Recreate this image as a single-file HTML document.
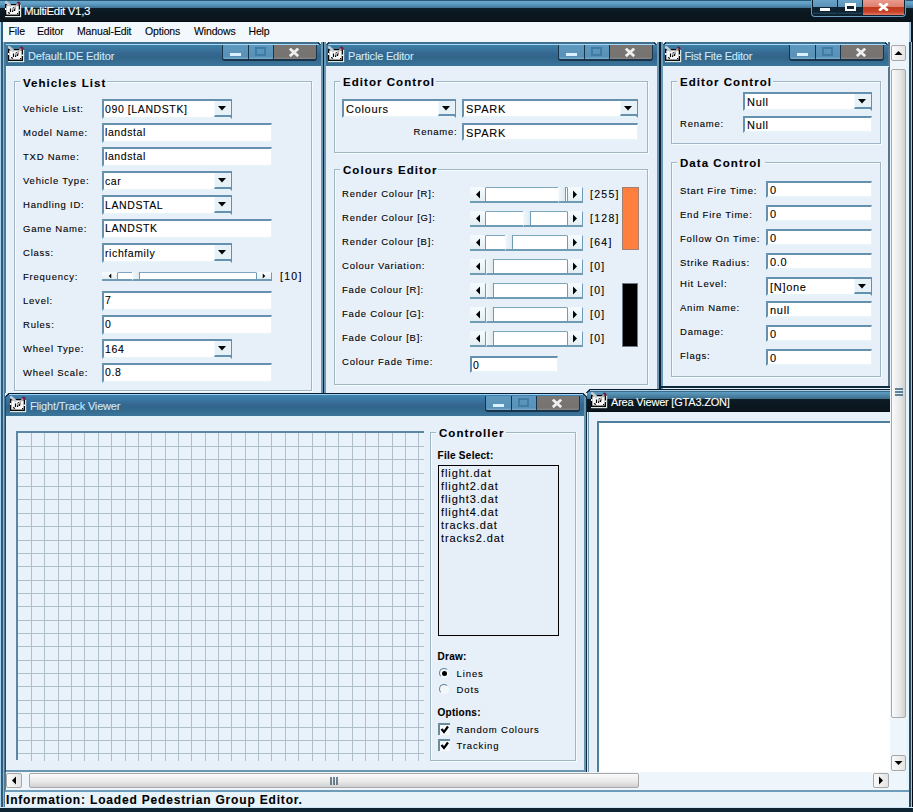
<!DOCTYPE html><html><head><meta charset="utf-8"><style>
html,body{margin:0;padding:0;}
body{width:913px;height:812px;position:relative;overflow:hidden;background:#e7eff9;font-family:"Liberation Sans",sans-serif;}
.t{position:absolute;white-space:pre;line-height:0;height:0;}
.t span{display:inline-block;line-height:normal;transform:translateY(-0.905em);-webkit-text-stroke:0.1px currentColor;}
</style></head><body>
<div style="position:absolute;left:0px;top:0px;width:913px;height:812px;background:#e7eff9"></div>
<div style="position:absolute;left:0px;top:0px;width:1px;height:812px;background:#a8d4f0"></div>
<div style="position:absolute;left:1px;top:0px;width:2px;height:812px;background:#2f5a78"></div>
<div style="position:absolute;left:3px;top:22px;width:3px;height:790px;background:#4d7a98"></div>
<div style="position:absolute;left:3px;top:22px;width:1px;height:790px;background:#8cb4d4"></div>
<div style="position:absolute;left:905px;top:22px;width:4px;height:790px;background:#e6f4fc"></div>
<div style="position:absolute;left:909px;top:42px;width:2px;height:770px;background:#2c4a5c"></div>
<div style="position:absolute;left:911px;top:42px;width:1px;height:770px;background:#9cc8e4"></div>
<div style="position:absolute;left:912px;top:0px;width:1px;height:812px;background:#000818"></div>
<div style="position:absolute;left:0px;top:0px;width:913px;height:22px;background:linear-gradient(#2a5a78 0,#2a5a78 1px,#6aa8cc 1px,#5e9cc4 4px,#3d6d8c 8.5px,#0e1e2a 8.5px,#0b1820 12px,#0a141c 21px,#02080c 22px)"></div>
<svg style="position:absolute;left:3px;top:0px" width="20" height="20" viewBox="0 0 20 20">
<rect x="2" y="16" width="16" height="1.2" fill="#dde8e0"/>
<rect x="17" y="5" width="1.2" height="12" fill="#dde8e0"/>
<rect x="2.65" y="4.65" width="13.7" height="10.6" fill="#fafafa" stroke="#000" stroke-width="1.3"/>
<rect x="2" y="8" width="1.4" height="2" fill="#fafafa"/>
<rect x="15.6" y="9.5" width="1.4" height="1.5" fill="#fafafa"/>
<path d="M7.5 8.5V12M10.5 7L9.5 12M12 7.5L11.5 11M5 12.5L7 13.5" stroke="#000" stroke-width="1.2" fill="none"/>
<rect x="14" y="13" width="1.2" height="1.2" fill="#000"/>
<path d="M3.2 2.2L7.2 5.8" stroke="#c4ccd0" stroke-width="2.6" stroke-linecap="round"/>
<path d="M14.5 4L9.5 10" stroke="#b8b8b8" stroke-width="1.4"/>
<circle cx="15.6" cy="3.4" r="1.9" fill="#6a2242"/>
<circle cx="14.6" cy="4.2" r="0.9" fill="#c08aa0"/>
</svg>
<div class="t" style="left:24px;top:15px;font-size:11.5px;font-weight:normal;color:#fff;letter-spacing:-0.35px;"><span>MultiEdit V1,3</span></div>
<div style="position:absolute;left:811px;top:0px;width:93px;height:16px;border:1px solid #6a9cc0;border-top:none;border-radius:0 0 4px 4px;background:#0f2230;overflow:hidden">
<div style="position:absolute;left:1px;top:0;width:24px;height:14.5px;background:linear-gradient(#6aa2c8 0,#5a92b8 7px,#10222f 7.5px,#0f2230 12px,#2a5670 14.5px,#0f2230 14.5px)"></div>
<div style="position:absolute;left:26px;top:0;width:24px;height:14.5px;background:linear-gradient(#6aa2c8 0,#5a92b8 7px,#10222f 7.5px,#0f2230 12px,#2a5670 14.5px,#0f2230 14.5px)"></div>
<div style="position:absolute;left:51px;top:0;width:41px;height:14.5px;background:linear-gradient(#e99a8c 0,#df8070 6.5px,#c13a1c 7.5px,#c84428 12px,#e07060 14.5px)"></div>
</div>
<div style="position:absolute;left:820px;top:8px;width:10px;height:3px;background:#fff"></div>
<div style="position:absolute;left:845px;top:3px;width:7px;height:3px;border:2px solid #fff;border-top-width:3px;background:#10222f"></div>
<svg style="position:absolute;left:878px;top:3px" width="11" height="8" viewBox="0 0 11 8"><path d="M1.2 0.5L9.8 7.5M9.8 0.5L1.2 7.5" stroke="#fff" stroke-width="2.8"/></svg>
<div style="position:absolute;left:3px;top:22px;width:906px;height:20px;background:#f2f8fc"></div>
<div style="position:absolute;left:909px;top:22px;width:2px;height:20px;background:#a0c8e0"></div>
<div style="position:absolute;left:911px;top:22px;width:2px;height:20px;background:#0a1620"></div>
<div class="t" style="left:8.5px;top:34.5px;font-size:10.5px;font-weight:normal;color:#000;letter-spacing:-0.15px;"><span>File</span></div>
<div class="t" style="left:37px;top:34.5px;font-size:10.5px;font-weight:normal;color:#000;letter-spacing:-0.15px;"><span>Editor</span></div>
<div class="t" style="left:77px;top:34.5px;font-size:10.5px;font-weight:normal;color:#000;letter-spacing:-0.15px;"><span>Manual-Edit</span></div>
<div class="t" style="left:145px;top:34.5px;font-size:10.5px;font-weight:normal;color:#000;letter-spacing:-0.15px;"><span>Options</span></div>
<div class="t" style="left:194px;top:34.5px;font-size:10.5px;font-weight:normal;color:#000;letter-spacing:-0.15px;"><span>Windows</span></div>
<div class="t" style="left:248.5px;top:34.5px;font-size:10.5px;font-weight:normal;color:#000;letter-spacing:-0.15px;"><span>Help</span></div>
<div style="position:absolute;left:6px;top:42px;width:884px;height:730px;background:#e7eff9"></div>
<div style="position:absolute;left:6px;top:42px;width:317px;height:352px;background:#e7eff9"></div>
<div style="position:absolute;left:6px;top:42px;width:315px;height:24px;background:linear-gradient(#3f7090 0,#3f7090 2px,#a8d8f5 2px,#a8d8f5 3px,#3d80a5 3px,#356690 50%,#316689 65%,#3b7399 95%,#3b7399 100%)"></div>
<div style="position:absolute;left:6px;top:66px;width:1px;height:328px;background:#e0f8ff"></div>
<div style="position:absolute;left:6px;top:66px;width:317px;height:1px;background:#e0f6fd"></div>
<svg style="position:absolute;left:6px;top:45px" width="20" height="20" viewBox="0 0 20 20">
<rect x="2" y="16" width="16" height="1.2" fill="#dde8e0"/>
<rect x="17" y="5" width="1.2" height="12" fill="#dde8e0"/>
<rect x="2.65" y="4.65" width="13.7" height="10.6" fill="#fafafa" stroke="#000" stroke-width="1.3"/>
<rect x="2" y="8" width="1.4" height="2" fill="#fafafa"/>
<rect x="15.6" y="9.5" width="1.4" height="1.5" fill="#fafafa"/>
<path d="M7.5 8.5V12M10.5 7L9.5 12M12 7.5L11.5 11M5 12.5L7 13.5" stroke="#000" stroke-width="1.2" fill="none"/>
<rect x="14" y="13" width="1.2" height="1.2" fill="#000"/>
<path d="M3.2 2.2L7.2 5.8" stroke="#c4ccd0" stroke-width="2.6" stroke-linecap="round"/>
<path d="M14.5 4L9.5 10" stroke="#b8b8b8" stroke-width="1.4"/>
<circle cx="15.6" cy="3.4" r="1.9" fill="#6a2242"/>
<circle cx="14.6" cy="4.2" r="0.9" fill="#c08aa0"/>
</svg>
<div class="t" style="left:28px;top:60px;font-size:11px;font-weight:normal;color:#cfeaf8;letter-spacing:-0.1px;"><span>Default.IDE Editor</span></div>
<div style="position:absolute;left:222px;top:45px;width:93px;height:14px;border:1px solid #17344a;border-top:none;border-bottom-width:2px;border-radius:0 0 3px 3px;background:#17344a;overflow:hidden">
<div style="position:absolute;left:0;top:0;width:25px;height:14px;background:linear-gradient(#6099bf,#5890b6 85%,#7fb0d0)"></div>
<div style="position:absolute;left:26px;top:0;width:24px;height:14px;background:linear-gradient(#6099bf,#5890b6 85%,#7fb0d0)"></div>
<div style="position:absolute;left:51px;top:0;width:42px;height:14px;background:linear-gradient(#7a7673,#767270 85%,#8a8a8c)"></div>
</div>
<div style="position:absolute;left:230px;top:53px;width:11px;height:3px;background:#d8f0ff"></div>
<div style="position:absolute;left:255px;top:47px;width:7px;height:5px;border:2px solid #3f7ca6"></div>
<svg style="position:absolute;left:289px;top:48px" width="10" height="9" viewBox="0 0 10 9"><path d="M0.8 0.6L9.2 8.2M9.2 0.6L0.8 8.2" stroke="#eeeeee" stroke-width="2.7"/></svg>
<div style="position:absolute;left:321px;top:42px;width:2px;height:352px;background:#6d98b4"></div>
<div style="position:absolute;left:323px;top:42px;width:1px;height:352px;background:#0a1e34"></div>
<div style="position:absolute;left:324px;top:42px;width:2px;height:352px;background:#6d98b4"></div>
<div style="position:absolute;left:326px;top:66px;width:1px;height:328px;background:#dcf6ff"></div>
<div style="position:absolute;left:14px;top:81px;width:296px;height:308px;border:1px solid #9fb6c4;box-shadow:1px 1px 0 #f4fcff, inset 1px 1px 0 #f4fcff"></div>
<div style="position:absolute;left:20px;top:75px;width:87px;height:12px;background:#e7eff9"></div>
<div class="t" style="left:23px;top:86.5px;font-size:11.5px;font-weight:bold;color:#000;letter-spacing:1.05px;"><span>Vehicles List</span></div>
<div class="t" style="left:23px;top:112px;font-size:9.5px;font-weight:normal;color:#000;letter-spacing:0.77px;"><span>Vehicle List:</span></div>
<div class="t" style="left:23px;top:136px;font-size:9.5px;font-weight:normal;color:#000;letter-spacing:0.77px;"><span>Model Name:</span></div>
<div class="t" style="left:23px;top:160px;font-size:9.5px;font-weight:normal;color:#000;letter-spacing:0.77px;"><span>TXD Name:</span></div>
<div class="t" style="left:23px;top:184px;font-size:9.5px;font-weight:normal;color:#000;letter-spacing:0.77px;"><span>Vehicle Type:</span></div>
<div class="t" style="left:23px;top:208px;font-size:9.5px;font-weight:normal;color:#000;letter-spacing:0.77px;"><span>Handling ID:</span></div>
<div class="t" style="left:23px;top:232px;font-size:9.5px;font-weight:normal;color:#000;letter-spacing:0.77px;"><span>Game Name:</span></div>
<div class="t" style="left:23px;top:256px;font-size:9.5px;font-weight:normal;color:#000;letter-spacing:0.77px;"><span>Class:</span></div>
<div class="t" style="left:23px;top:280px;font-size:9.5px;font-weight:normal;color:#000;letter-spacing:0.77px;"><span>Frequency:</span></div>
<div class="t" style="left:23px;top:304px;font-size:9.5px;font-weight:normal;color:#000;letter-spacing:0.77px;"><span>Level:</span></div>
<div class="t" style="left:23px;top:328px;font-size:9.5px;font-weight:normal;color:#000;letter-spacing:0.77px;"><span>Rules:</span></div>
<div class="t" style="left:23px;top:352px;font-size:9.5px;font-weight:normal;color:#000;letter-spacing:0.77px;"><span>Wheel Type:</span></div>
<div class="t" style="left:23px;top:376px;font-size:9.5px;font-weight:normal;color:#000;letter-spacing:0.77px;"><span>Wheel Scale:</span></div>
<div style="position:absolute;left:102px;top:99px;width:126px;height:16px;background:#fff;border-top:2px solid #6590ae;border-left:2px solid #6590ae;border-right:2px solid #6590ae;border-bottom:2px solid #e6f4fa"></div>
<div style="position:absolute;left:214px;top:101px;width:16px;height:14px;background:#e6f2f8;border-bottom:2px solid #6590ae;border-left:1px solid #f4fbff;box-sizing:content-box"></div>
<svg style="position:absolute;left:218px;top:106px" width="8" height="5"><path d="M0 0H8L4 4.5Z" fill="#000"/></svg>
<div class="t" style="left:105px;top:113px;font-size:10.5px;font-weight:normal;color:#000;letter-spacing:0.6px;"><span>090 [LANDSTK]</span></div>
<div style="position:absolute;left:102px;top:123px;width:167px;height:16px;background:#fff;border-top:2px solid #6590ae;border-left:2px solid #6590ae;border-bottom:2px solid #e6f4fa;border-right:1px solid #e6f4fa"></div>
<div class="t" style="left:105px;top:136px;font-size:10.5px;font-weight:normal;color:#000;letter-spacing:0.6px;"><span>landstal</span></div>
<div style="position:absolute;left:102px;top:147px;width:167px;height:16px;background:#fff;border-top:2px solid #6590ae;border-left:2px solid #6590ae;border-bottom:2px solid #e6f4fa;border-right:1px solid #e6f4fa"></div>
<div class="t" style="left:105px;top:160px;font-size:10.5px;font-weight:normal;color:#000;letter-spacing:0.6px;"><span>landstal</span></div>
<div style="position:absolute;left:102px;top:171px;width:126px;height:16px;background:#fff;border-top:2px solid #6590ae;border-left:2px solid #6590ae;border-right:2px solid #6590ae;border-bottom:2px solid #e6f4fa"></div>
<div style="position:absolute;left:214px;top:173px;width:16px;height:14px;background:#e6f2f8;border-bottom:2px solid #6590ae;border-left:1px solid #f4fbff;box-sizing:content-box"></div>
<svg style="position:absolute;left:218px;top:178px" width="8" height="5"><path d="M0 0H8L4 4.5Z" fill="#000"/></svg>
<div class="t" style="left:105px;top:185px;font-size:10.5px;font-weight:normal;color:#000;letter-spacing:0.6px;"><span>car</span></div>
<div style="position:absolute;left:102px;top:195px;width:126px;height:16px;background:#fff;border-top:2px solid #6590ae;border-left:2px solid #6590ae;border-right:2px solid #6590ae;border-bottom:2px solid #e6f4fa"></div>
<div style="position:absolute;left:214px;top:197px;width:16px;height:14px;background:#e6f2f8;border-bottom:2px solid #6590ae;border-left:1px solid #f4fbff;box-sizing:content-box"></div>
<svg style="position:absolute;left:218px;top:202px" width="8" height="5"><path d="M0 0H8L4 4.5Z" fill="#000"/></svg>
<div class="t" style="left:105px;top:209px;font-size:10.5px;font-weight:normal;color:#000;letter-spacing:0.6px;"><span>LANDSTAL</span></div>
<div style="position:absolute;left:102px;top:219px;width:167px;height:16px;background:#fff;border-top:2px solid #6590ae;border-left:2px solid #6590ae;border-bottom:2px solid #e6f4fa;border-right:1px solid #e6f4fa"></div>
<div class="t" style="left:105px;top:232px;font-size:10.5px;font-weight:normal;color:#000;letter-spacing:0.6px;"><span>LANDSTK</span></div>
<div style="position:absolute;left:102px;top:243px;width:126px;height:16px;background:#fff;border-top:2px solid #6590ae;border-left:2px solid #6590ae;border-right:2px solid #6590ae;border-bottom:2px solid #e6f4fa"></div>
<div style="position:absolute;left:214px;top:245px;width:16px;height:14px;background:#e6f2f8;border-bottom:2px solid #6590ae;border-left:1px solid #f4fbff;box-sizing:content-box"></div>
<svg style="position:absolute;left:218px;top:250px" width="8" height="5"><path d="M0 0H8L4 4.5Z" fill="#000"/></svg>
<div class="t" style="left:105px;top:257px;font-size:10.5px;font-weight:normal;color:#000;letter-spacing:0.6px;"><span>richfamily</span></div>
<div style="position:absolute;left:102px;top:291px;width:167px;height:16px;background:#fff;border-top:2px solid #6590ae;border-left:2px solid #6590ae;border-bottom:2px solid #e6f4fa;border-right:1px solid #e6f4fa"></div>
<div class="t" style="left:105px;top:304px;font-size:10.5px;font-weight:normal;color:#000;letter-spacing:0.6px;"><span>7</span></div>
<div style="position:absolute;left:102px;top:315px;width:167px;height:16px;background:#fff;border-top:2px solid #6590ae;border-left:2px solid #6590ae;border-bottom:2px solid #e6f4fa;border-right:1px solid #e6f4fa"></div>
<div class="t" style="left:105px;top:328px;font-size:10.5px;font-weight:normal;color:#000;letter-spacing:0.6px;"><span>0</span></div>
<div style="position:absolute;left:102px;top:339px;width:126px;height:16px;background:#fff;border-top:2px solid #6590ae;border-left:2px solid #6590ae;border-right:2px solid #6590ae;border-bottom:2px solid #e6f4fa"></div>
<div style="position:absolute;left:214px;top:341px;width:16px;height:14px;background:#e6f2f8;border-bottom:2px solid #6590ae;border-left:1px solid #f4fbff;box-sizing:content-box"></div>
<svg style="position:absolute;left:218px;top:346px" width="8" height="5"><path d="M0 0H8L4 4.5Z" fill="#000"/></svg>
<div class="t" style="left:105px;top:353px;font-size:10.5px;font-weight:normal;color:#000;letter-spacing:0.6px;"><span>164</span></div>
<div style="position:absolute;left:102px;top:363px;width:167px;height:16px;background:#fff;border-top:2px solid #6590ae;border-left:2px solid #6590ae;border-bottom:2px solid #e6f4fa;border-right:1px solid #e6f4fa"></div>
<div class="t" style="left:105px;top:376px;font-size:10.5px;font-weight:normal;color:#000;letter-spacing:0.6px;"><span>0.8</span></div>
<div style="position:absolute;left:102px;top:272px;width:170px;height:9px;background:#fff;box-sizing:border-box;border-top:1px solid #7fa6bd;border-bottom:2px solid #6f9bb5"></div>
<div style="position:absolute;left:102px;top:272px;width:16px;height:9px;box-sizing:border-box;background:linear-gradient(#f6fbfd,#e3eef4);border-right:1px solid #6f9bb5;border-bottom:2px solid #6f9bb5;border-top:1px solid #f4fbff"></div>
<svg style="position:absolute;left:0;top:0;width:913px;height:812px;pointer-events:none"><path d="M111.25 273.5V278.5L108.75 276.0Z" fill="#000"/></svg>
<div style="position:absolute;left:256px;top:272px;width:16px;height:9px;box-sizing:border-box;background:linear-gradient(#f6fbfd,#e3eef4);border-right:1px solid #6f9bb5;border-left:1px solid #6f9bb5;border-bottom:2px solid #6f9bb5;border-top:1px solid #f4fbff"></div>
<svg style="position:absolute;left:0;top:0;width:913px;height:812px;pointer-events:none"><path d="M262.75 273.5V278.5L265.25 276.0Z" fill="#000"/></svg>
<div style="position:absolute;left:132px;top:272px;width:8px;height:9px;box-sizing:border-box;background:linear-gradient(90deg,#eef6fa,#dfeaf1);border-right:1px solid #6f9bb5;border-bottom:2px solid #6f9bb5;border-left:1px solid #f4fbff"></div>
<div class="t" style="left:280px;top:280px;font-size:10.5px;font-weight:normal;color:#000;letter-spacing:1.29px;"><span>[10]</span></div>
<div style="position:absolute;left:326px;top:42px;width:331px;height:352px;background:#e7eff9"></div>
<div style="position:absolute;left:326px;top:42px;width:331px;height:24px;background:linear-gradient(#3f7090 0,#3f7090 2px,#a8d8f5 2px,#a8d8f5 3px,#3d80a5 3px,#356690 50%,#316689 65%,#3b7399 95%,#3b7399 100%)"></div>
<div style="position:absolute;left:326px;top:66px;width:333px;height:1px;background:#e0f6fd"></div>
<svg style="position:absolute;left:326px;top:45px" width="20" height="20" viewBox="0 0 20 20">
<rect x="2" y="16" width="16" height="1.2" fill="#dde8e0"/>
<rect x="17" y="5" width="1.2" height="12" fill="#dde8e0"/>
<rect x="2.65" y="4.65" width="13.7" height="10.6" fill="#fafafa" stroke="#000" stroke-width="1.3"/>
<rect x="2" y="8" width="1.4" height="2" fill="#fafafa"/>
<rect x="15.6" y="9.5" width="1.4" height="1.5" fill="#fafafa"/>
<path d="M7.5 8.5V12M10.5 7L9.5 12M12 7.5L11.5 11M5 12.5L7 13.5" stroke="#000" stroke-width="1.2" fill="none"/>
<rect x="14" y="13" width="1.2" height="1.2" fill="#000"/>
<path d="M3.2 2.2L7.2 5.8" stroke="#c4ccd0" stroke-width="2.6" stroke-linecap="round"/>
<path d="M14.5 4L9.5 10" stroke="#b8b8b8" stroke-width="1.4"/>
<circle cx="15.6" cy="3.4" r="1.9" fill="#6a2242"/>
<circle cx="14.6" cy="4.2" r="0.9" fill="#c08aa0"/>
</svg>
<div class="t" style="left:348px;top:60px;font-size:11px;font-weight:normal;color:#cfeaf8;letter-spacing:-0.2px;"><span>Particle Editor</span></div>
<div style="position:absolute;left:558px;top:45px;width:93px;height:14px;border:1px solid #17344a;border-top:none;border-bottom-width:2px;border-radius:0 0 3px 3px;background:#17344a;overflow:hidden">
<div style="position:absolute;left:0;top:0;width:25px;height:14px;background:linear-gradient(#6099bf,#5890b6 85%,#7fb0d0)"></div>
<div style="position:absolute;left:26px;top:0;width:24px;height:14px;background:linear-gradient(#6099bf,#5890b6 85%,#7fb0d0)"></div>
<div style="position:absolute;left:51px;top:0;width:42px;height:14px;background:linear-gradient(#7a7673,#767270 85%,#8a8a8c)"></div>
</div>
<div style="position:absolute;left:566px;top:53px;width:11px;height:3px;background:#d8f0ff"></div>
<div style="position:absolute;left:591px;top:47px;width:7px;height:5px;border:2px solid #3f7ca6"></div>
<svg style="position:absolute;left:625px;top:48px" width="10" height="9" viewBox="0 0 10 9"><path d="M0.8 0.6L9.2 8.2M9.2 0.6L0.8 8.2" stroke="#eeeeee" stroke-width="2.7"/></svg>
<div style="position:absolute;left:657px;top:42px;width:2px;height:352px;background:#6d98b4"></div>
<div style="position:absolute;left:659px;top:42px;width:2px;height:352px;background:#0a1e34"></div>
<div style="position:absolute;left:661px;top:42px;width:2px;height:352px;background:#6d98b4"></div>
<div style="position:absolute;left:663px;top:66px;width:1px;height:322px;background:#dcf6ff"></div>
<div style="position:absolute;left:334px;top:81px;width:312px;height:70px;border:1px solid #9fb6c4;box-shadow:1px 1px 0 #f4fcff, inset 1px 1px 0 #f4fcff"></div>
<div style="position:absolute;left:340px;top:75px;width:96px;height:12px;background:#e7eff9"></div>
<div class="t" style="left:343px;top:85.5px;font-size:11.5px;font-weight:bold;color:#000;letter-spacing:1.05px;"><span>Editor Control</span></div>
<div style="position:absolute;left:342px;top:99px;width:110px;height:15px;background:#fff;border-top:2px solid #6590ae;border-left:2px solid #6590ae;border-right:2px solid #6590ae;border-bottom:2px solid #e6f4fa"></div>
<div style="position:absolute;left:438px;top:101px;width:16px;height:13px;background:#e6f2f8;border-bottom:2px solid #6590ae;border-left:1px solid #f4fbff;box-sizing:content-box"></div>
<svg style="position:absolute;left:442px;top:106px" width="8" height="5"><path d="M0 0H8L4 4.5Z" fill="#000"/></svg>
<div class="t" style="left:346px;top:113px;font-size:11px;font-weight:normal;color:#000;letter-spacing:0.7px;"><span>Colours</span></div>
<div style="position:absolute;left:462px;top:99px;width:172px;height:15px;background:#fff;border-top:2px solid #6590ae;border-left:2px solid #6590ae;border-right:2px solid #6590ae;border-bottom:2px solid #e6f4fa"></div>
<div style="position:absolute;left:620px;top:101px;width:16px;height:13px;background:#e6f2f8;border-bottom:2px solid #6590ae;border-left:1px solid #f4fbff;box-sizing:content-box"></div>
<svg style="position:absolute;left:624px;top:106px" width="8" height="5"><path d="M0 0H8L4 4.5Z" fill="#000"/></svg>
<div class="t" style="left:466px;top:113px;font-size:11px;font-weight:normal;color:#000;letter-spacing:0.7px;"><span>SPARK</span></div>
<div class="t" style="left:413.5px;top:135px;font-size:9.5px;font-weight:normal;color:#000;letter-spacing:0.77px;"><span>Rename:</span></div>
<div style="position:absolute;left:462px;top:123px;width:173px;height:14px;background:#fff;border-top:2px solid #6590ae;border-left:2px solid #6590ae;border-bottom:2px solid #e6f4fa;border-right:1px solid #e6f4fa"></div>
<div class="t" style="left:466px;top:137px;font-size:11px;font-weight:normal;color:#000;letter-spacing:0.7px;"><span>SPARK</span></div>
<div style="position:absolute;left:334px;top:169px;width:312px;height:214px;border:1px solid #9fb6c4;box-shadow:1px 1px 0 #f4fcff, inset 1px 1px 0 #f4fcff"></div>
<div style="position:absolute;left:340px;top:163px;width:98px;height:12px;background:#e7eff9"></div>
<div class="t" style="left:343px;top:173.5px;font-size:11.5px;font-weight:bold;color:#000;letter-spacing:1.05px;"><span>Colours Editor</span></div>
<div class="t" style="left:342px;top:197px;font-size:9.5px;font-weight:normal;color:#000;letter-spacing:0.77px;"><span>Render Colour [R]:</span></div>
<div class="t" style="left:342px;top:221px;font-size:9.5px;font-weight:normal;color:#000;letter-spacing:0.77px;"><span>Render Colour [G]:</span></div>
<div class="t" style="left:342px;top:245px;font-size:9.5px;font-weight:normal;color:#000;letter-spacing:0.77px;"><span>Render Colour [B]:</span></div>
<div class="t" style="left:342px;top:269px;font-size:9.5px;font-weight:normal;color:#000;letter-spacing:0.77px;"><span>Colour Variation:</span></div>
<div class="t" style="left:342px;top:293px;font-size:9.5px;font-weight:normal;color:#000;letter-spacing:0.77px;"><span>Fade Colour [R]:</span></div>
<div class="t" style="left:342px;top:317px;font-size:9.5px;font-weight:normal;color:#000;letter-spacing:0.77px;"><span>Fade Colour [G]:</span></div>
<div class="t" style="left:342px;top:341px;font-size:9.5px;font-weight:normal;color:#000;letter-spacing:0.77px;"><span>Fade Colour [B]:</span></div>
<div class="t" style="left:342px;top:365px;font-size:9.5px;font-weight:normal;color:#000;letter-spacing:0.77px;"><span>Colour Fade Time:</span></div>
<div style="position:absolute;left:470px;top:187px;width:113px;height:16px;background:#fff;box-sizing:border-box;border-top:1px solid #7fa6bd;border-bottom:2px solid #6f9bb5"></div>
<div style="position:absolute;left:470px;top:187px;width:16px;height:16px;box-sizing:border-box;background:linear-gradient(#f6fbfd,#e3eef4);border-right:1px solid #6f9bb5;border-bottom:2px solid #6f9bb5;border-top:1px solid #f4fbff"></div>
<svg style="position:absolute;left:0;top:0;width:913px;height:812px;pointer-events:none"><path d="M480.0 190.5V198.5L476.0 194.5Z" fill="#000"/></svg>
<div style="position:absolute;left:567px;top:187px;width:16px;height:16px;box-sizing:border-box;background:linear-gradient(#f6fbfd,#e3eef4);border-right:1px solid #6f9bb5;border-left:1px solid #6f9bb5;border-bottom:2px solid #6f9bb5;border-top:1px solid #f4fbff"></div>
<svg style="position:absolute;left:0;top:0;width:913px;height:812px;pointer-events:none"><path d="M573.0 190.5V198.5L577.0 194.5Z" fill="#000"/></svg>
<div style="position:absolute;left:558px;top:187px;width:8px;height:16px;box-sizing:border-box;background:linear-gradient(90deg,#eef6fa,#dfeaf1);border-right:1px solid #6f9bb5;border-bottom:2px solid #6f9bb5;border-left:1px solid #f4fbff"></div>
<div style="position:absolute;left:470px;top:211px;width:113px;height:16px;background:#fff;box-sizing:border-box;border-top:1px solid #7fa6bd;border-bottom:2px solid #6f9bb5"></div>
<div style="position:absolute;left:470px;top:211px;width:16px;height:16px;box-sizing:border-box;background:linear-gradient(#f6fbfd,#e3eef4);border-right:1px solid #6f9bb5;border-bottom:2px solid #6f9bb5;border-top:1px solid #f4fbff"></div>
<svg style="position:absolute;left:0;top:0;width:913px;height:812px;pointer-events:none"><path d="M480.0 214.5V222.5L476.0 218.5Z" fill="#000"/></svg>
<div style="position:absolute;left:567px;top:211px;width:16px;height:16px;box-sizing:border-box;background:linear-gradient(#f6fbfd,#e3eef4);border-right:1px solid #6f9bb5;border-left:1px solid #6f9bb5;border-bottom:2px solid #6f9bb5;border-top:1px solid #f4fbff"></div>
<svg style="position:absolute;left:0;top:0;width:913px;height:812px;pointer-events:none"><path d="M573.0 214.5V222.5L577.0 218.5Z" fill="#000"/></svg>
<div style="position:absolute;left:523px;top:211px;width:8px;height:16px;box-sizing:border-box;background:linear-gradient(90deg,#eef6fa,#dfeaf1);border-right:1px solid #6f9bb5;border-bottom:2px solid #6f9bb5;border-left:1px solid #f4fbff"></div>
<div style="position:absolute;left:470px;top:235px;width:113px;height:16px;background:#fff;box-sizing:border-box;border-top:1px solid #7fa6bd;border-bottom:2px solid #6f9bb5"></div>
<div style="position:absolute;left:470px;top:235px;width:16px;height:16px;box-sizing:border-box;background:linear-gradient(#f6fbfd,#e3eef4);border-right:1px solid #6f9bb5;border-bottom:2px solid #6f9bb5;border-top:1px solid #f4fbff"></div>
<svg style="position:absolute;left:0;top:0;width:913px;height:812px;pointer-events:none"><path d="M480.0 238.5V246.5L476.0 242.5Z" fill="#000"/></svg>
<div style="position:absolute;left:567px;top:235px;width:16px;height:16px;box-sizing:border-box;background:linear-gradient(#f6fbfd,#e3eef4);border-right:1px solid #6f9bb5;border-left:1px solid #6f9bb5;border-bottom:2px solid #6f9bb5;border-top:1px solid #f4fbff"></div>
<svg style="position:absolute;left:0;top:0;width:913px;height:812px;pointer-events:none"><path d="M573.0 238.5V246.5L577.0 242.5Z" fill="#000"/></svg>
<div style="position:absolute;left:505px;top:235px;width:8px;height:16px;box-sizing:border-box;background:linear-gradient(90deg,#eef6fa,#dfeaf1);border-right:1px solid #6f9bb5;border-bottom:2px solid #6f9bb5;border-left:1px solid #f4fbff"></div>
<div style="position:absolute;left:470px;top:259px;width:113px;height:16px;background:#fff;box-sizing:border-box;border-top:1px solid #7fa6bd;border-bottom:2px solid #6f9bb5"></div>
<div style="position:absolute;left:470px;top:259px;width:16px;height:16px;box-sizing:border-box;background:linear-gradient(#f6fbfd,#e3eef4);border-right:1px solid #6f9bb5;border-bottom:2px solid #6f9bb5;border-top:1px solid #f4fbff"></div>
<svg style="position:absolute;left:0;top:0;width:913px;height:812px;pointer-events:none"><path d="M480.0 262.5V270.5L476.0 266.5Z" fill="#000"/></svg>
<div style="position:absolute;left:567px;top:259px;width:16px;height:16px;box-sizing:border-box;background:linear-gradient(#f6fbfd,#e3eef4);border-right:1px solid #6f9bb5;border-left:1px solid #6f9bb5;border-bottom:2px solid #6f9bb5;border-top:1px solid #f4fbff"></div>
<svg style="position:absolute;left:0;top:0;width:913px;height:812px;pointer-events:none"><path d="M573.0 262.5V270.5L577.0 266.5Z" fill="#000"/></svg>
<div style="position:absolute;left:486px;top:259px;width:8px;height:16px;box-sizing:border-box;background:linear-gradient(90deg,#eef6fa,#dfeaf1);border-right:1px solid #6f9bb5;border-bottom:2px solid #6f9bb5;border-left:1px solid #f4fbff"></div>
<div style="position:absolute;left:470px;top:283px;width:113px;height:16px;background:#fff;box-sizing:border-box;border-top:1px solid #7fa6bd;border-bottom:2px solid #6f9bb5"></div>
<div style="position:absolute;left:470px;top:283px;width:16px;height:16px;box-sizing:border-box;background:linear-gradient(#f6fbfd,#e3eef4);border-right:1px solid #6f9bb5;border-bottom:2px solid #6f9bb5;border-top:1px solid #f4fbff"></div>
<svg style="position:absolute;left:0;top:0;width:913px;height:812px;pointer-events:none"><path d="M480.0 286.5V294.5L476.0 290.5Z" fill="#000"/></svg>
<div style="position:absolute;left:567px;top:283px;width:16px;height:16px;box-sizing:border-box;background:linear-gradient(#f6fbfd,#e3eef4);border-right:1px solid #6f9bb5;border-left:1px solid #6f9bb5;border-bottom:2px solid #6f9bb5;border-top:1px solid #f4fbff"></div>
<svg style="position:absolute;left:0;top:0;width:913px;height:812px;pointer-events:none"><path d="M573.0 286.5V294.5L577.0 290.5Z" fill="#000"/></svg>
<div style="position:absolute;left:486px;top:283px;width:8px;height:16px;box-sizing:border-box;background:linear-gradient(90deg,#eef6fa,#dfeaf1);border-right:1px solid #6f9bb5;border-bottom:2px solid #6f9bb5;border-left:1px solid #f4fbff"></div>
<div style="position:absolute;left:470px;top:307px;width:113px;height:16px;background:#fff;box-sizing:border-box;border-top:1px solid #7fa6bd;border-bottom:2px solid #6f9bb5"></div>
<div style="position:absolute;left:470px;top:307px;width:16px;height:16px;box-sizing:border-box;background:linear-gradient(#f6fbfd,#e3eef4);border-right:1px solid #6f9bb5;border-bottom:2px solid #6f9bb5;border-top:1px solid #f4fbff"></div>
<svg style="position:absolute;left:0;top:0;width:913px;height:812px;pointer-events:none"><path d="M480.0 310.5V318.5L476.0 314.5Z" fill="#000"/></svg>
<div style="position:absolute;left:567px;top:307px;width:16px;height:16px;box-sizing:border-box;background:linear-gradient(#f6fbfd,#e3eef4);border-right:1px solid #6f9bb5;border-left:1px solid #6f9bb5;border-bottom:2px solid #6f9bb5;border-top:1px solid #f4fbff"></div>
<svg style="position:absolute;left:0;top:0;width:913px;height:812px;pointer-events:none"><path d="M573.0 310.5V318.5L577.0 314.5Z" fill="#000"/></svg>
<div style="position:absolute;left:486px;top:307px;width:8px;height:16px;box-sizing:border-box;background:linear-gradient(90deg,#eef6fa,#dfeaf1);border-right:1px solid #6f9bb5;border-bottom:2px solid #6f9bb5;border-left:1px solid #f4fbff"></div>
<div style="position:absolute;left:470px;top:331px;width:113px;height:16px;background:#fff;box-sizing:border-box;border-top:1px solid #7fa6bd;border-bottom:2px solid #6f9bb5"></div>
<div style="position:absolute;left:470px;top:331px;width:16px;height:16px;box-sizing:border-box;background:linear-gradient(#f6fbfd,#e3eef4);border-right:1px solid #6f9bb5;border-bottom:2px solid #6f9bb5;border-top:1px solid #f4fbff"></div>
<svg style="position:absolute;left:0;top:0;width:913px;height:812px;pointer-events:none"><path d="M480.0 334.5V342.5L476.0 338.5Z" fill="#000"/></svg>
<div style="position:absolute;left:567px;top:331px;width:16px;height:16px;box-sizing:border-box;background:linear-gradient(#f6fbfd,#e3eef4);border-right:1px solid #6f9bb5;border-left:1px solid #6f9bb5;border-bottom:2px solid #6f9bb5;border-top:1px solid #f4fbff"></div>
<svg style="position:absolute;left:0;top:0;width:913px;height:812px;pointer-events:none"><path d="M573.0 334.5V342.5L577.0 338.5Z" fill="#000"/></svg>
<div style="position:absolute;left:486px;top:331px;width:8px;height:16px;box-sizing:border-box;background:linear-gradient(90deg,#eef6fa,#dfeaf1);border-right:1px solid #6f9bb5;border-bottom:2px solid #6f9bb5;border-left:1px solid #f4fbff"></div>
<div class="t" style="left:590px;top:198px;font-size:10.5px;font-weight:normal;color:#000;letter-spacing:1.29px;"><span>[255]</span></div>
<div class="t" style="left:590px;top:222px;font-size:10.5px;font-weight:normal;color:#000;letter-spacing:1.29px;"><span>[128]</span></div>
<div class="t" style="left:590px;top:246px;font-size:10.5px;font-weight:normal;color:#000;letter-spacing:1.29px;"><span>[64]</span></div>
<div class="t" style="left:590px;top:270px;font-size:10.5px;font-weight:normal;color:#000;letter-spacing:1.29px;"><span>[0]</span></div>
<div class="t" style="left:590px;top:294px;font-size:10.5px;font-weight:normal;color:#000;letter-spacing:1.29px;"><span>[0]</span></div>
<div class="t" style="left:590px;top:318px;font-size:10.5px;font-weight:normal;color:#000;letter-spacing:1.29px;"><span>[0]</span></div>
<div class="t" style="left:590px;top:342px;font-size:10.5px;font-weight:normal;color:#000;letter-spacing:1.29px;"><span>[0]</span></div>
<div style="position:absolute;left:622px;top:187px;width:17px;height:63px;background:#ff7f3f;box-sizing:border-box;border:1px solid #a08070"></div>
<div style="position:absolute;left:622px;top:283px;width:16px;height:64px;background:#000;box-sizing:border-box;border:1px solid #6a7a88"></div>
<div style="position:absolute;left:470px;top:356px;width:85px;height:13px;background:#fff;border-top:2px solid #6590ae;border-left:2px solid #6590ae;border-bottom:2px solid #e6f4fa;border-right:1px solid #e6f4fa"></div>
<div class="t" style="left:473px;top:369px;font-size:10.5px;font-weight:normal;color:#000;letter-spacing:0.6px;"><span>0</span></div>
<div style="position:absolute;left:663px;top:42px;width:225px;height:346px;background:#e7eff9"></div>
<div style="position:absolute;left:663px;top:42px;width:225px;height:24px;background:linear-gradient(#3f7090 0,#3f7090 2px,#a8d8f5 2px,#a8d8f5 3px,#3d80a5 3px,#356690 50%,#316689 65%,#3b7399 95%,#3b7399 100%)"></div>
<div style="position:absolute;left:888px;top:42px;width:2px;height:346px;background:#56778f"></div>
<div style="position:absolute;left:663px;top:66px;width:226px;height:1px;background:#e0f6fd"></div>
<svg style="position:absolute;left:663px;top:45px" width="20" height="20" viewBox="0 0 20 20">
<rect x="2" y="16" width="16" height="1.2" fill="#dde8e0"/>
<rect x="17" y="5" width="1.2" height="12" fill="#dde8e0"/>
<rect x="2.65" y="4.65" width="13.7" height="10.6" fill="#fafafa" stroke="#000" stroke-width="1.3"/>
<rect x="2" y="8" width="1.4" height="2" fill="#fafafa"/>
<rect x="15.6" y="9.5" width="1.4" height="1.5" fill="#fafafa"/>
<path d="M7.5 8.5V12M10.5 7L9.5 12M12 7.5L11.5 11M5 12.5L7 13.5" stroke="#000" stroke-width="1.2" fill="none"/>
<rect x="14" y="13" width="1.2" height="1.2" fill="#000"/>
<path d="M3.2 2.2L7.2 5.8" stroke="#c4ccd0" stroke-width="2.6" stroke-linecap="round"/>
<path d="M14.5 4L9.5 10" stroke="#b8b8b8" stroke-width="1.4"/>
<circle cx="15.6" cy="3.4" r="1.9" fill="#6a2242"/>
<circle cx="14.6" cy="4.2" r="0.9" fill="#c08aa0"/>
</svg>
<div class="t" style="left:684.5px;top:60px;font-size:11px;font-weight:normal;color:#cfeaf8;letter-spacing:-0.2px;"><span>Fist Fite Editor</span></div>
<div style="position:absolute;left:789px;top:45px;width:93px;height:14px;border:1px solid #17344a;border-top:none;border-bottom-width:2px;border-radius:0 0 3px 3px;background:#17344a;overflow:hidden">
<div style="position:absolute;left:0;top:0;width:25px;height:14px;background:linear-gradient(#6099bf,#5890b6 85%,#7fb0d0)"></div>
<div style="position:absolute;left:26px;top:0;width:24px;height:14px;background:linear-gradient(#6099bf,#5890b6 85%,#7fb0d0)"></div>
<div style="position:absolute;left:51px;top:0;width:42px;height:14px;background:linear-gradient(#7a7673,#767270 85%,#8a8a8c)"></div>
</div>
<div style="position:absolute;left:797px;top:53px;width:11px;height:3px;background:#d8f0ff"></div>
<div style="position:absolute;left:822px;top:47px;width:7px;height:5px;border:2px solid #3f7ca6"></div>
<svg style="position:absolute;left:856px;top:48px" width="10" height="9" viewBox="0 0 10 9"><path d="M0.8 0.6L9.2 8.2M9.2 0.6L0.8 8.2" stroke="#eeeeee" stroke-width="2.7"/></svg>
<div style="position:absolute;left:671px;top:81px;width:208px;height:61px;border:1px solid #9fb6c4;box-shadow:1px 1px 0 #f4fcff, inset 1px 1px 0 #f4fcff"></div>
<div style="position:absolute;left:677px;top:75px;width:96px;height:12px;background:#e7eff9"></div>
<div class="t" style="left:680px;top:85.5px;font-size:11.5px;font-weight:bold;color:#000;letter-spacing:1.05px;"><span>Editor Control</span></div>
<div style="position:absolute;left:743px;top:92px;width:125px;height:15px;background:#fff;border-top:2px solid #6590ae;border-left:2px solid #6590ae;border-right:2px solid #6590ae;border-bottom:2px solid #e6f4fa"></div>
<div style="position:absolute;left:854px;top:94px;width:16px;height:13px;background:#e6f2f8;border-bottom:2px solid #6590ae;border-left:1px solid #f4fbff;box-sizing:content-box"></div>
<svg style="position:absolute;left:858px;top:99px" width="8" height="5"><path d="M0 0H8L4 4.5Z" fill="#000"/></svg>
<div class="t" style="left:747px;top:106px;font-size:11px;font-weight:normal;color:#000;letter-spacing:0.7px;"><span>Null</span></div>
<div class="t" style="left:680px;top:127px;font-size:9.5px;font-weight:normal;color:#000;letter-spacing:0.77px;"><span>Rename:</span></div>
<div style="position:absolute;left:743px;top:116px;width:126px;height:13px;background:#fff;border-top:2px solid #6590ae;border-left:2px solid #6590ae;border-bottom:2px solid #e6f4fa;border-right:1px solid #e6f4fa"></div>
<div class="t" style="left:747px;top:129px;font-size:11px;font-weight:normal;color:#000;letter-spacing:0.7px;"><span>Null</span></div>
<div style="position:absolute;left:671px;top:162px;width:208px;height:213px;border:1px solid #9fb6c4;box-shadow:1px 1px 0 #f4fcff, inset 1px 1px 0 #f4fcff"></div>
<div style="position:absolute;left:677px;top:156px;width:88px;height:12px;background:#e7eff9"></div>
<div class="t" style="left:680px;top:166.5px;font-size:11.5px;font-weight:bold;color:#000;letter-spacing:1.05px;"><span>Data Control</span></div>
<div class="t" style="left:680px;top:194px;font-size:9.5px;font-weight:normal;color:#000;letter-spacing:0.77px;"><span>Start Fire Time:</span></div>
<div class="t" style="left:680px;top:218px;font-size:9.5px;font-weight:normal;color:#000;letter-spacing:0.77px;"><span>End Fire Time:</span></div>
<div class="t" style="left:680px;top:242px;font-size:9.5px;font-weight:normal;color:#000;letter-spacing:0.77px;"><span>Follow On Time:</span></div>
<div class="t" style="left:680px;top:266px;font-size:9.5px;font-weight:normal;color:#000;letter-spacing:0.77px;"><span>Strike Radius:</span></div>
<div class="t" style="left:680px;top:287px;font-size:9.5px;font-weight:normal;color:#000;letter-spacing:0.77px;"><span>Hit Level:</span></div>
<div class="t" style="left:680px;top:311px;font-size:9.5px;font-weight:normal;color:#000;letter-spacing:0.77px;"><span>Anim Name:</span></div>
<div class="t" style="left:680px;top:335px;font-size:9.5px;font-weight:normal;color:#000;letter-spacing:0.77px;"><span>Damage:</span></div>
<div class="t" style="left:680px;top:359px;font-size:9.5px;font-weight:normal;color:#000;letter-spacing:0.77px;"><span>Flags:</span></div>
<div style="position:absolute;left:766px;top:181px;width:103px;height:13px;background:#fff;border-top:2px solid #6590ae;border-left:2px solid #6590ae;border-bottom:2px solid #e6f4fa;border-right:1px solid #e6f4fa"></div>
<div class="t" style="left:770px;top:194px;font-size:11px;font-weight:normal;color:#000;letter-spacing:0.7px;"><span>0</span></div>
<div style="position:absolute;left:766px;top:205px;width:103px;height:13px;background:#fff;border-top:2px solid #6590ae;border-left:2px solid #6590ae;border-bottom:2px solid #e6f4fa;border-right:1px solid #e6f4fa"></div>
<div class="t" style="left:770px;top:218px;font-size:11px;font-weight:normal;color:#000;letter-spacing:0.7px;"><span>0</span></div>
<div style="position:absolute;left:766px;top:229px;width:103px;height:13px;background:#fff;border-top:2px solid #6590ae;border-left:2px solid #6590ae;border-bottom:2px solid #e6f4fa;border-right:1px solid #e6f4fa"></div>
<div class="t" style="left:770px;top:242px;font-size:11px;font-weight:normal;color:#000;letter-spacing:0.7px;"><span>0</span></div>
<div style="position:absolute;left:766px;top:253px;width:103px;height:13px;background:#fff;border-top:2px solid #6590ae;border-left:2px solid #6590ae;border-bottom:2px solid #e6f4fa;border-right:1px solid #e6f4fa"></div>
<div class="t" style="left:770px;top:266px;font-size:11px;font-weight:normal;color:#000;letter-spacing:0.7px;"><span>0.0</span></div>
<div style="position:absolute;left:766px;top:277px;width:102px;height:15px;background:#fff;border-top:2px solid #6590ae;border-left:2px solid #6590ae;border-right:2px solid #6590ae;border-bottom:2px solid #e6f4fa"></div>
<div style="position:absolute;left:854px;top:279px;width:16px;height:13px;background:#e6f2f8;border-bottom:2px solid #6590ae;border-left:1px solid #f4fbff;box-sizing:content-box"></div>
<svg style="position:absolute;left:858px;top:284px" width="8" height="5"><path d="M0 0H8L4 4.5Z" fill="#000"/></svg>
<div class="t" style="left:770px;top:291px;font-size:11px;font-weight:normal;color:#000;letter-spacing:0.7px;"><span>[N]one</span></div>
<div style="position:absolute;left:766px;top:301px;width:103px;height:13px;background:#fff;border-top:2px solid #6590ae;border-left:2px solid #6590ae;border-bottom:2px solid #e6f4fa;border-right:1px solid #e6f4fa"></div>
<div class="t" style="left:770px;top:314px;font-size:11px;font-weight:normal;color:#000;letter-spacing:0.7px;"><span>null</span></div>
<div style="position:absolute;left:766px;top:325px;width:103px;height:13px;background:#fff;border-top:2px solid #6590ae;border-left:2px solid #6590ae;border-bottom:2px solid #e6f4fa;border-right:1px solid #e6f4fa"></div>
<div class="t" style="left:770px;top:338px;font-size:11px;font-weight:normal;color:#000;letter-spacing:0.7px;"><span>0</span></div>
<div style="position:absolute;left:766px;top:349px;width:103px;height:13px;background:#fff;border-top:2px solid #6590ae;border-left:2px solid #6590ae;border-bottom:2px solid #e6f4fa;border-right:1px solid #e6f4fa"></div>
<div class="t" style="left:770px;top:362px;font-size:11px;font-weight:normal;color:#000;letter-spacing:0.7px;"><span>0</span></div>
<div style="position:absolute;left:661px;top:386px;width:229px;height:2px;background:#0f2a3c"></div>
<div style="position:absolute;left:6px;top:393px;width:580px;height:379px;background:#e7eff9"></div>
<div style="position:absolute;left:6px;top:393px;width:578px;height:23px;background:linear-gradient(#0a1e34 0,#0a1e34 1px,#a0d0f0 1px,#a0d0f0 2px,#3f84b0 2px,#366792 50%,#316689 65%,#3b7399 95%,#3b7399 100%)"></div>
<div style="position:absolute;left:6px;top:416px;width:578px;height:1px;background:#e0f6fd"></div>
<svg style="position:absolute;left:8px;top:395px" width="20" height="20" viewBox="0 0 20 20">
<rect x="2" y="16" width="16" height="1.2" fill="#dde8e0"/>
<rect x="17" y="5" width="1.2" height="12" fill="#dde8e0"/>
<rect x="2.65" y="4.65" width="13.7" height="10.6" fill="#fafafa" stroke="#000" stroke-width="1.3"/>
<rect x="2" y="8" width="1.4" height="2" fill="#fafafa"/>
<rect x="15.6" y="9.5" width="1.4" height="1.5" fill="#fafafa"/>
<path d="M7.5 8.5V12M10.5 7L9.5 12M12 7.5L11.5 11M5 12.5L7 13.5" stroke="#000" stroke-width="1.2" fill="none"/>
<rect x="14" y="13" width="1.2" height="1.2" fill="#000"/>
<path d="M3.2 2.2L7.2 5.8" stroke="#c4ccd0" stroke-width="2.6" stroke-linecap="round"/>
<path d="M14.5 4L9.5 10" stroke="#b8b8b8" stroke-width="1.4"/>
<circle cx="15.6" cy="3.4" r="1.9" fill="#6a2242"/>
<circle cx="14.6" cy="4.2" r="0.9" fill="#c08aa0"/>
</svg>
<div class="t" style="left:30px;top:410px;font-size:11px;font-weight:normal;color:#cfeaf8;letter-spacing:-0.17px;"><span>Flight/Track Viewer</span></div>
<div style="position:absolute;left:485px;top:396px;width:93px;height:14px;border:1px solid #17344a;border-top:none;border-bottom-width:2px;border-radius:0 0 3px 3px;background:#17344a;overflow:hidden">
<div style="position:absolute;left:0;top:0;width:25px;height:14px;background:linear-gradient(#6099bf,#5890b6 85%,#7fb0d0)"></div>
<div style="position:absolute;left:26px;top:0;width:24px;height:14px;background:linear-gradient(#6099bf,#5890b6 85%,#7fb0d0)"></div>
<div style="position:absolute;left:51px;top:0;width:42px;height:14px;background:linear-gradient(#7a7673,#767270 85%,#8a8a8c)"></div>
</div>
<div style="position:absolute;left:493px;top:404px;width:11px;height:3px;background:#d8f0ff"></div>
<div style="position:absolute;left:518px;top:398px;width:7px;height:5px;border:2px solid #3f7ca6"></div>
<svg style="position:absolute;left:552px;top:399px" width="10" height="9" viewBox="0 0 10 9"><path d="M0.8 0.6L9.2 8.2M9.2 0.6L0.8 8.2" stroke="#eeeeee" stroke-width="2.7"/></svg>
<div style="position:absolute;left:584px;top:393px;width:2px;height:379px;background:#6a96b0"></div>
<div style="position:absolute;left:586px;top:393px;width:1px;height:379px;background:#0f2a3c"></div>
<div style="position:absolute;left:6px;top:770px;width:578px;height:2px;background:#6a96b0"></div>
<div style="position:absolute;left:5px;top:393px;width:1px;height:379px;background:#1f4a66"></div>
<svg style="position:absolute;left:16px;top:431px" width="408" height="330"><rect x="0" y="0" width="408" height="330" fill="#e9f1fa"/><rect x="15" y="2" width="1" height="328" fill="#b0c0ca"/><rect x="28" y="2" width="1" height="328" fill="#b0c0ca"/><rect x="42" y="2" width="1" height="328" fill="#b0c0ca"/><rect x="55" y="2" width="1" height="328" fill="#b0c0ca"/><rect x="68" y="2" width="1" height="328" fill="#b0c0ca"/><rect x="82" y="2" width="1" height="328" fill="#b0c0ca"/><rect x="95" y="2" width="1" height="328" fill="#b0c0ca"/><rect x="109" y="2" width="1" height="328" fill="#b0c0ca"/><rect x="122" y="2" width="1" height="328" fill="#b0c0ca"/><rect x="135" y="2" width="1" height="328" fill="#b0c0ca"/><rect x="149" y="2" width="1" height="328" fill="#b0c0ca"/><rect x="162" y="2" width="1" height="328" fill="#b0c0ca"/><rect x="175" y="2" width="1" height="328" fill="#b0c0ca"/><rect x="189" y="2" width="1" height="328" fill="#b0c0ca"/><rect x="202" y="2" width="1" height="328" fill="#b0c0ca"/><rect x="215" y="2" width="1" height="328" fill="#b0c0ca"/><rect x="229" y="2" width="1" height="328" fill="#b0c0ca"/><rect x="242" y="2" width="1" height="328" fill="#b0c0ca"/><rect x="255" y="2" width="1" height="328" fill="#b0c0ca"/><rect x="269" y="2" width="1" height="328" fill="#b0c0ca"/><rect x="282" y="2" width="1" height="328" fill="#b0c0ca"/><rect x="296" y="2" width="1" height="328" fill="#b0c0ca"/><rect x="309" y="2" width="1" height="328" fill="#b0c0ca"/><rect x="322" y="2" width="1" height="328" fill="#b0c0ca"/><rect x="336" y="2" width="1" height="328" fill="#b0c0ca"/><rect x="349" y="2" width="1" height="328" fill="#b0c0ca"/><rect x="362" y="2" width="1" height="328" fill="#b0c0ca"/><rect x="376" y="2" width="1" height="328" fill="#b0c0ca"/><rect x="389" y="2" width="1" height="328" fill="#b0c0ca"/><rect x="402" y="2" width="1" height="328" fill="#b0c0ca"/><rect x="2" y="15" width="406" height="1" fill="#b0c0ca"/><rect x="2" y="28" width="406" height="1" fill="#b0c0ca"/><rect x="2" y="42" width="406" height="1" fill="#b0c0ca"/><rect x="2" y="55" width="406" height="1" fill="#b0c0ca"/><rect x="2" y="68" width="406" height="1" fill="#b0c0ca"/><rect x="2" y="82" width="406" height="1" fill="#b0c0ca"/><rect x="2" y="95" width="406" height="1" fill="#b0c0ca"/><rect x="2" y="109" width="406" height="1" fill="#b0c0ca"/><rect x="2" y="122" width="406" height="1" fill="#b0c0ca"/><rect x="2" y="135" width="406" height="1" fill="#b0c0ca"/><rect x="2" y="149" width="406" height="1" fill="#b0c0ca"/><rect x="2" y="162" width="406" height="1" fill="#b0c0ca"/><rect x="2" y="175" width="406" height="1" fill="#b0c0ca"/><rect x="2" y="189" width="406" height="1" fill="#b0c0ca"/><rect x="2" y="202" width="406" height="1" fill="#b0c0ca"/><rect x="2" y="215" width="406" height="1" fill="#b0c0ca"/><rect x="2" y="229" width="406" height="1" fill="#b0c0ca"/><rect x="2" y="242" width="406" height="1" fill="#b0c0ca"/><rect x="2" y="255" width="406" height="1" fill="#b0c0ca"/><rect x="2" y="269" width="406" height="1" fill="#b0c0ca"/><rect x="2" y="282" width="406" height="1" fill="#b0c0ca"/><rect x="2" y="296" width="406" height="1" fill="#b0c0ca"/><rect x="2" y="309" width="406" height="1" fill="#b0c0ca"/><rect x="2" y="322" width="406" height="1" fill="#b0c0ca"/><rect x="0" y="0" width="408" height="2" fill="#5a88a2"/><rect x="0" y="0" width="2" height="329" fill="#5a88a2"/></svg>
<div style="position:absolute;left:430px;top:432px;width:144px;height:327px;border:1px solid #9fb6c4;box-shadow:1px 1px 0 #f4fcff, inset 1px 1px 0 #f4fcff"></div>
<div style="position:absolute;left:436px;top:426px;width:70px;height:12px;background:#e7eff9"></div>
<div class="t" style="left:439px;top:436.5px;font-size:11.5px;font-weight:bold;color:#000;letter-spacing:1.05px;"><span>Controller</span></div>
<div class="t" style="left:437.5px;top:459px;font-size:10px;font-weight:bold;color:#000;letter-spacing:0.27px;"><span>File Select:</span></div>
<div style="position:absolute;left:438px;top:465px;width:121px;height:171px;box-sizing:border-box;border:1px solid #000;background:#e6eff8"></div>
<div class="t" style="left:441px;top:477px;font-size:11px;font-weight:normal;color:#000;letter-spacing:0.9px;"><span>flight.dat</span></div>
<div class="t" style="left:441px;top:490px;font-size:11px;font-weight:normal;color:#000;letter-spacing:0.9px;"><span>flight2.dat</span></div>
<div class="t" style="left:441px;top:503px;font-size:11px;font-weight:normal;color:#000;letter-spacing:0.9px;"><span>flight3.dat</span></div>
<div class="t" style="left:441px;top:516px;font-size:11px;font-weight:normal;color:#000;letter-spacing:0.9px;"><span>flight4.dat</span></div>
<div class="t" style="left:441px;top:529px;font-size:11px;font-weight:normal;color:#000;letter-spacing:0.9px;"><span>tracks.dat</span></div>
<div class="t" style="left:441px;top:542px;font-size:11px;font-weight:normal;color:#000;letter-spacing:0.9px;"><span>tracks2.dat</span></div>
<div class="t" style="left:437.5px;top:659.5px;font-size:10px;font-weight:bold;color:#000;letter-spacing:0.27px;"><span>Draw:</span></div>
<div style="position:absolute;left:439px;top:668px;width:8px;height:8px;border-radius:50%;border:1.5px solid;border-color:#5e8494 #f4fbff #f4fbff #5e8494;transform:rotate(0deg);background:#f2f6f6"></div>
<div style="position:absolute;left:442px;top:671px;width:5px;height:5px;border-radius:50%;background:#000"></div>
<div style="position:absolute;left:439px;top:684px;width:8px;height:8px;border-radius:50%;border:1.5px solid;border-color:#5e8494 #f4fbff #f4fbff #5e8494;background:#f2f6f6"></div>
<div class="t" style="left:456.5px;top:677px;font-size:9.5px;font-weight:normal;color:#000;letter-spacing:0.9px;"><span>Lines</span></div>
<div class="t" style="left:456.5px;top:693px;font-size:9.5px;font-weight:normal;color:#000;letter-spacing:0.9px;"><span>Dots</span></div>
<div class="t" style="left:437.5px;top:715.5px;font-size:10px;font-weight:bold;color:#000;letter-spacing:0.27px;"><span>Options:</span></div>
<div style="position:absolute;left:438px;top:723px;width:10px;height:10px;border-top:2px solid #6a8c9a;border-left:2px solid #6a8c9a;background:#f6fafa"></div>
<svg style="position:absolute;left:440px;top:725px" width="10" height="10"><path d="M1.5 4 L4 7 L8 1.5" stroke="#000" stroke-width="2.2" fill="none"/></svg>
<div class="t" style="left:456.5px;top:733px;font-size:9.5px;font-weight:normal;color:#000;letter-spacing:0.85px;"><span>Random Colours</span></div>
<div style="position:absolute;left:438px;top:739px;width:10px;height:10px;border-top:2px solid #6a8c9a;border-left:2px solid #6a8c9a;background:#f6fafa"></div>
<svg style="position:absolute;left:440px;top:741px" width="10" height="10"><path d="M1.5 4 L4 7 L8 1.5" stroke="#000" stroke-width="2.2" fill="none"/></svg>
<div class="t" style="left:456.5px;top:749px;font-size:9.5px;font-weight:normal;color:#000;letter-spacing:0.85px;"><span>Tracking</span></div>
<div style="position:absolute;left:586px;top:389px;width:304px;height:383px;background:#e7eff9"></div>
<div style="position:absolute;left:586px;top:389px;width:304px;height:23px;background:linear-gradient(#0a1a26 0,#0a1a26 1px,#a8d0ec 1px,#a8d0ec 2px,#3a6a88 2px,#3a6a88 3px,#5e9ec2 3px,#3c6c8a 10px,#0d1c28 10px,#0b1820 14px,#0a141c 22px,#02080c 23px)"></div>
<svg style="position:absolute;left:589px;top:391px" width="20" height="20" viewBox="0 0 20 20">
<rect x="2" y="16" width="16" height="1.2" fill="#dde8e0"/>
<rect x="17" y="5" width="1.2" height="12" fill="#dde8e0"/>
<rect x="2.65" y="4.65" width="13.7" height="10.6" fill="#fafafa" stroke="#000" stroke-width="1.3"/>
<rect x="2" y="8" width="1.4" height="2" fill="#fafafa"/>
<rect x="15.6" y="9.5" width="1.4" height="1.5" fill="#fafafa"/>
<path d="M7.5 8.5V12M10.5 7L9.5 12M12 7.5L11.5 11M5 12.5L7 13.5" stroke="#000" stroke-width="1.2" fill="none"/>
<rect x="14" y="13" width="1.2" height="1.2" fill="#000"/>
<path d="M3.2 2.2L7.2 5.8" stroke="#c4ccd0" stroke-width="2.6" stroke-linecap="round"/>
<path d="M14.5 4L9.5 10" stroke="#b8b8b8" stroke-width="1.4"/>
<circle cx="15.6" cy="3.4" r="1.9" fill="#6a2242"/>
<circle cx="14.6" cy="4.2" r="0.9" fill="#c08aa0"/>
</svg>
<div class="t" style="left:611px;top:406px;font-size:11px;font-weight:normal;color:#fff;letter-spacing:-0.2px;"><span>Area Viewer [GTA3.ZON]</span></div>
<div style="position:absolute;left:586px;top:389px;width:1px;height:383px;background:#0f2a3c"></div>
<div style="position:absolute;left:587px;top:412px;width:1px;height:360px;background:#cfe8f8"></div>
<div style="position:absolute;left:588px;top:412px;width:1px;height:360px;background:#6a96b0"></div>
<div style="position:absolute;left:597px;top:421px;width:293px;height:351px;background:#fff;box-sizing:border-box;border-top:2px solid #4f7f9c;border-left:2px solid #4f7f9c"></div>
<svg style="position:absolute;left:318px;top:42px" width="3" height="3"><path d="M0 0H3V3Z" fill="#f2f8fc"/><path d="M0 0.5L2.5 3" stroke="#0a1e34" stroke-width="1.2" fill="none"/></svg>
<svg style="position:absolute;left:326px;top:42px" width="3" height="3"><path d="M0 0H3L0 3Z" fill="#f2f8fc"/><path d="M3 0.5L0.5 3" stroke="#0a1e34" stroke-width="1.2" fill="none"/></svg>
<svg style="position:absolute;left:654px;top:42px" width="3" height="3"><path d="M0 0H3V3Z" fill="#f2f8fc"/><path d="M0 0.5L2.5 3" stroke="#0a1e34" stroke-width="1.2" fill="none"/></svg>
<svg style="position:absolute;left:663px;top:42px" width="3" height="3"><path d="M0 0H3L0 3Z" fill="#f2f8fc"/><path d="M3 0.5L0.5 3" stroke="#0a1e34" stroke-width="1.2" fill="none"/></svg>
<svg style="position:absolute;left:885px;top:42px" width="3" height="3"><path d="M0 0H3V3Z" fill="#eef6fb"/><path d="M0 0.5L2.5 3" stroke="#0a1e34" stroke-width="1.2" fill="none"/></svg>
<svg style="position:absolute;left:5px;top:393px" width="4" height="4"><path d="M0 0H4L0 4Z" fill="#e7eff9"/><path d="M4 0.5L0.5 4" stroke="#0a1e34" stroke-width="1.2" fill="none"/></svg>
<svg style="position:absolute;left:586px;top:389px" width="4" height="4"><path d="M0 0H4L0 4Z" fill="#e7eff9"/><path d="M4 0.5L0.5 4" stroke="#0a1e34" stroke-width="1.2" fill="none"/></svg>
<svg style="position:absolute;left:583px;top:393px" width="4" height="4"><path d="M0 0H4V4Z" fill="#e7eff9"/><path d="M0 0.5L3.5 4" stroke="#0a1e34" stroke-width="1.2" fill="none"/></svg>
<div style="position:absolute;left:890px;top:42px;width:16px;height:730px;background:#eef6fb"></div>
<div style="position:absolute;left:891px;top:45px;width:13px;height:14px;border:1px solid #a8a8a8;border-radius:2px;background:linear-gradient(90deg,#fafafa,#e4e4e4)"></div>
<svg style="position:absolute;left:0;top:0;width:913px;height:812px;pointer-events:none"><path d="M894.5 55.0H902.5L898.5 51.0Z" fill="#000"/></svg>
<div style="position:absolute;left:891px;top:69px;width:13px;height:647px;border:1px solid #a8a8a8;border-radius:2px;background:linear-gradient(90deg,#fbfbfb,#e8e8e8 60%,#d0d0d0)"></div>
<svg style="position:absolute;left:893px;top:388px" width="12" height="9"><path d="M2 1H10M2 4H10M2 7H10" stroke="#2f5f7f" stroke-width="1.3"/></svg>
<div style="position:absolute;left:891px;top:755px;width:13px;height:14px;border:1px solid #a8a8a8;border-radius:2px;background:linear-gradient(90deg,#fafafa,#e4e4e4)"></div>
<svg style="position:absolute;left:0;top:0;width:913px;height:812px;pointer-events:none"><path d="M894.5 761.0H902.5L898.5 765.0Z" fill="#000"/></svg>
<div style="position:absolute;left:6px;top:772px;width:884px;height:19px;background:#eef6fb"></div>
<div style="position:absolute;left:6px;top:773px;width:14px;height:13px;border:1px solid #a8a8a8;border-radius:2px;background:linear-gradient(90deg,#fafafa,#e4e4e4)"></div>
<svg style="position:absolute;left:0;top:0;width:913px;height:812px;pointer-events:none"><path d="M16.0 776.5V784.5L12.0 780.5Z" fill="#000"/></svg>
<div style="position:absolute;left:29px;top:773px;width:608px;height:13px;border:1px solid #a8a8a8;border-radius:2px;background:linear-gradient(#fbfbfb,#e8e8e8 60%,#d0d0d0)"></div>
<svg style="position:absolute;left:330px;top:775px" width="9" height="12"><path d="M1 2V10M4 2V10M7 2V10" stroke="#2a4a60" stroke-width="1.3"/></svg>
<div style="position:absolute;left:873px;top:773px;width:14px;height:13px;border:1px solid #a8a8a8;border-radius:2px;background:linear-gradient(90deg,#fafafa,#e4e4e4)"></div>
<svg style="position:absolute;left:0;top:0;width:913px;height:812px;pointer-events:none"><path d="M879.0 776.5V784.5L883.0 780.5Z" fill="#000"/></svg>
<div style="position:absolute;left:890px;top:772px;width:16px;height:19px;background:#eef6fb"></div>
<div style="position:absolute;left:5px;top:790px;width:904px;height:2px;background:#6f9cb8"></div>
<div style="position:absolute;left:5px;top:792px;width:904px;height:15px;background:#e8f2f9"></div>
<div class="t" style="left:6px;top:804px;font-size:12px;font-weight:bold;color:#000;letter-spacing:0.82px;"><span>Information: Loaded Pedestrian Group Editor.</span></div>
<div style="position:absolute;left:0px;top:807px;width:913px;height:1px;background:#cfe6f4"></div>
<div style="position:absolute;left:0px;top:808px;width:913px;height:4px;background:#0f2433"></div>
</body></html>
